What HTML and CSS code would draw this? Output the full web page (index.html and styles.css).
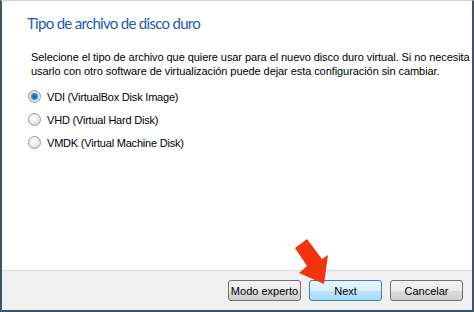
FILE: index.html
```html
<!DOCTYPE html>
<html lang="es">
<head>
  <meta charset="UTF-8" />
  <title>Tipo de archivo de disco duro</title>
  <link rel="stylesheet" href="styles.css">
</head>
<body>
  <div class="window">
    <div class="page">
      <h1 class="title">Tipo de archivo de disco duro</h1>
      <p class="desc">Selecione el tipo de archivo que quiere usar para el nuevo disco duro virtual. Si no necesita<br>usarlo con otro software de virtualización puede dejar esta configuración sin cambiar.</p>
      <div class="options">
        <label class="option"><span class="radio checked"></span>VDI (VirtualBox Disk Image)</label>
        <label class="option"><span class="radio"></span>VHD (Virtual Hard Disk)</label>
        <label class="option"><span class="radio"></span>VMDK (Virtual Machine Disk)</label>
      </div>
    </div>
    <div class="footer">
      <button class="btn">Modo experto</button>
      <button class="btn next">Next</button>
      <button class="btn">Cancelar</button>
    </div>
    <!-- red arrow pointing at the Next button -->
    <svg class="arrow" width="474" height="312" viewBox="0 0 474 312">
      <polygon points="295,248 307,239 322,259 328,255 324,284 299,273 307,266" fill="#f2330f"/>
    </svg>
  </div>
</body>
</html>
```

FILE: styles.css
```css
html, body {
  margin: 0;
  height: 100%;
}

body {
  font-family: "Liberation Sans", Arial, sans-serif;
  font-size: 11px;
  letter-spacing: -0.07px;
  color: #000;
  background: #fff;
}

.window {
  position: relative;
  height: 312px;
  box-sizing: border-box;
  border-left: 2px solid #3e5468;
  border-right: 2px solid #3e5468;
  border-bottom: 2px solid #3e5468;
  border-top: 1px solid #c9d2da;
  display: flex;
  flex-direction: column;
}

.page {
  flex: 1;
  padding: 12px 0 0 25px;
}

.title {
  margin: 0;
  padding-top: 1px;
  font-family: Lato, "Liberation Sans", sans-serif;
  font-weight: normal;
  font-size: 15px;
  letter-spacing: -0.7px;
  line-height: 19px;
  color: #1d59b9;
}

.desc {
  margin: 17px 0 0 4px;
  line-height: 14px;
  white-space: nowrap;
}

.options {
  margin-top: 12px;
  display: flex;
  flex-direction: column;
  gap: 10px;
  letter-spacing: -0.2px;
}

.option {
  display: flex;
  align-items: center;
  gap: 6px;
  height: 13px;
}

.radio {
  width: 11px;
  height: 11px;
  border-radius: 50%;
  border: 1px solid #9b9b9b;
  background: radial-gradient(circle at 40% 35%, #ffffff 0%, #e6e6e6 60%, #cfcfcf 100%);
  margin-left: 1px;
}

.radio.checked {
  background: radial-gradient(circle, #0b4f8c 0, #2a8ad6 2.5px, #5fb0ea 3.5px, #dcdcdc 4px, #f4f4f4 100%);
}

.footer {
  height: 39px;
  background: #f0f0f0;
  border-top: 1px solid #dcdcdc;
  display: flex;
  justify-content: flex-end;
  align-items: center;
  gap: 8px;
  padding-right: 9px;
}

.btn {
  width: 73px;
  height: 21px;
  padding: 0;
  font-family: "Liberation Sans", Arial, sans-serif;
  font-size: 11px;
  color: #000;
  border: 1px solid #707070;
  border-radius: 3px;
  background: linear-gradient(#f2f2f2 0%, #ebebeb 50%, #dddddd 51%, #cfcfcf 100%);
}

.btn.next {
  border-color: #3c7fb1;
  background: linear-gradient(#eaf6fd 0%, #d9f0fc 50%, #bee6fd 51%, #a7d9f5 100%);
}

.arrow {
  position: absolute;
  left: -2px;
  top: -1px;
  pointer-events: none;
}
```
